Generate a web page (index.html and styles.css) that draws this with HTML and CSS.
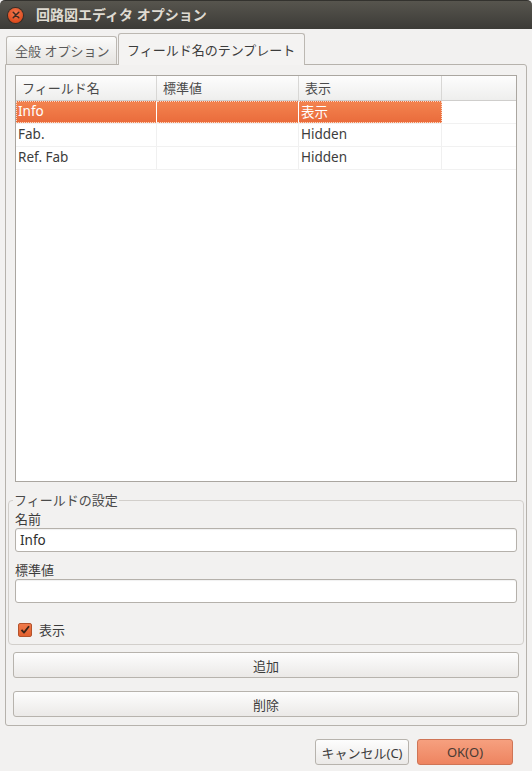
FILE: index.html
```html
<!DOCTYPE html>
<html lang="ja">
<head>
<meta charset="utf-8">
<title>回路図エディタ オプション</title>
<link rel="stylesheet" href="styles.css">
</head>
<body>
<div class="window">
  <div class="titlebar">
    <span class="close"><svg width="8" height="8" viewBox="0 0 8 8"><path d="M1.2 1.2 L6.8 6.8 M6.8 1.2 L1.2 6.8" stroke="#3a2a22" stroke-width="1.5" stroke-linecap="round"/></svg></span>
    <span class="title">回路図エディタ オプション</span>
  </div>
  <div class="tabs">
    <div class="tab">全般 オプション</div>
    <div class="tab active">フィールド名のテンプレート</div>
  </div>
  <div class="panel">
    <div class="table">
      <div class="row head">
        <div class="cell c1">フィールド名</div>
        <div class="cell c2">標準値</div>
        <div class="cell c3">表示</div>
        <div class="cell c4"></div>
      </div>
      <div class="row sel">
        <div class="cell c1 focus">Info</div>
        <div class="cell c2 focus"></div>
        <div class="cell c3 focus">表示</div>
        <div class="cell c4"></div>
      </div>
      <div class="row">
        <div class="cell c1">Fab.</div>
        <div class="cell c2"></div>
        <div class="cell c3">Hidden</div>
        <div class="cell c4"></div>
      </div>
      <div class="row">
        <div class="cell c1">Ref. Fab</div>
        <div class="cell c2"></div>
        <div class="cell c3">Hidden</div>
        <div class="cell c4"></div>
      </div>
    </div>
    <fieldset class="group">
      <legend>フィールドの設定</legend>
      <div class="label">名前</div>
      <div class="input">Info</div>
      <div class="label">標準値</div>
      <div class="input"></div>
      <div class="check">
        <span class="box"><svg width="12" height="12" viewBox="0 0 12 12"><path d="M2.5 5.8 L5 8.6 L10 2.2" fill="none" stroke="#3b2418" stroke-width="1.8" stroke-linejoin="round"/></svg></span>
        <span>表示</span>
      </div>
    </fieldset>
    <div class="btn wide">追加</div>
    <div class="btn wide del">削除</div>
  </div>
  <div class="footer">
    <div class="btn cancel">キャンセル(C)</div>
    <div class="btn ok">OK(O)</div>
  </div>
</div>
</body>
</html>
```

FILE: styles.css
```css
* { box-sizing: border-box; }
html, body { margin: 0; padding: 0; }
body {
  background: #f2f1f0;
  font-family: "Noto Sans", "Noto Sans CJK JP", sans-serif;
  font-size: 13.5px;
  color: #3c3c3c;
  width: 532px;
  height: 771px;
  overflow: hidden;
}
.window { width: 532px; height: 771px; background: #f2f1f0; }
.titlebar {
  height: 29px;
  background: linear-gradient(#57554e, #3c3b37);
  border-top: 1px solid #33322e;
  border-radius: 5px 5px 0 0;
  display: flex;
  align-items: center;
  padding-left: 8px;
}
.close {
  width: 15px; height: 15px;
  border-radius: 50%;
  background: radial-gradient(circle at 50% 35%, #f37a52, #df4c1e 70%, #c43f14);
  box-shadow: 0 0 0 1px #3a2c24;
  display: flex; align-items: center; justify-content: center;
}
.title {
  margin-left: 13px;
  color: #dfdbd2;
  font-weight: bold;
  font-size: 14px;
  line-height: 1;
}
.tabs {
  display: flex;
  align-items: flex-end;
  padding-left: 6px;
  margin-top: 4px;
  height: 31px;
}
.tab {
  height: 28px;
  padding: 0 0 0 8px;
  display: flex;
  align-items: center;
  border: 1px solid #bcb8b2;
  border-bottom: none;
  border-radius: 3px 3px 0 0;
  background: linear-gradient(#fbfbfa, #e6e4e1);
  color: #5a5a5a;
  width: 111px;
  margin-right: 1px;
  font-size: 13px;
  white-space: nowrap;
  overflow: hidden;
}
.tab.active {
  height: 32px;
  width: 187px;
  margin-bottom: -1px;
  background: #f4f3f2;
  color: #3c3c3c;
  position: relative;
  z-index: 1;
}
.panel {
  margin: 0 5px;
  height: 662px;
  border: 1px solid #b6b2ac;
  border-radius: 0 3px 3px 3px;
  padding: 10px 2px 0;
}
.table {
  margin: 0 7px;
  height: 407px;
  border: 1px solid #aaa6a0;
  background: #fff;
}
.row { display: flex; height: 23px; border-bottom: 1px solid #f1f1f1; }
.row .cell { padding-bottom: 2px; }
.row.head {
  height: 25px;
  background: linear-gradient(#fdfdfd, #eeeeed);
  border-bottom: 1px solid #cfcecc;
  color: #4a4a4a;
  font-size: 13px;
}
.cell {
  display: flex; align-items: center;
  padding-left: 2px;
  border-right: 1px solid #f0f0f0;
  white-space: nowrap;
}
.head .cell { padding-left: 6px; border-right-color: #d8d7d5; }
.c1 { width: 141px; }
.c2 { width: 142px; }
.c3 { width: 143px; }
.c4 { flex: 1; border-right: none; }
.sel .cell.focus {
  background: linear-gradient(#f3834f, #ea6c3c);
  color: #fff;
  border-top: 1px dotted #fbd9c8;
  border-bottom: 1px dotted #fbd9c8;
  border-right: 1px solid #fff;
}
.sel .c1.focus { border-left: 1px dotted #fbd9c8; padding-left: 1px; }
.sel .c3.focus { border-right: 1px dotted #fbd9c8; }
.group {
  margin: 11px 0 0;
  padding: 0 6px 0;
  height: 152px;
  border: 1px solid #d2cfcb;
  border-radius: 4px;
}
.group legend {
  padding: 0 1px;
  margin-left: -2px;
  color: #4a4a4a;
  font-size: 13px;
  line-height: 15px;
}
.label { font-size: 13px; line-height: 15px; height: 15px; color: #3c3c3c; margin-top: 4px; }
.label + .input { margin-top: 1px; }
.input + .label { margin-top: 11px; }
.input {
  height: 24px;
  background: #fff;
  border: 1px solid #b5b1ab;
  border-radius: 3px;
  box-shadow: inset 0 1px 1px rgba(0,0,0,0.06);
  display: flex; align-items: center;
  padding-left: 4px;
  padding-bottom: 1px;
  color: #2e2e2e;
}
.check {
  display: flex; align-items: center;
  margin-top: 17px;
  padding-left: 3px;
  font-size: 13px;
}
.box {
  width: 14px; height: 14px;
  background: linear-gradient(#f07a4a, #e2602e);
  border: 1px solid #b4532c;
  border-radius: 2px;
  display: flex; align-items: center; justify-content: center;
  margin-right: 7px;
}
.btn {
  height: 26px;
  border: 1px solid #b7b3ad;
  border-radius: 3px;
  background: linear-gradient(#fdfdfd, #ebe9e7);
  display: flex; align-items: center; justify-content: center;
  color: #3c3c3c;
  font-size: 13px;
}
.wide { margin: 7px 5px 0 5px; }
.wide.del { margin-top: 13px; }
.footer {
  display: flex;
  justify-content: flex-end;
  gap: 8px;
  padding: 13px 19px 0 0;
}
.cancel { width: 94px; }
.ok {
  width: 96px;
  background: linear-gradient(#f6a07f, #ee8460);
  border-color: #cf7556;
  color: #4a3a34;
}
```
